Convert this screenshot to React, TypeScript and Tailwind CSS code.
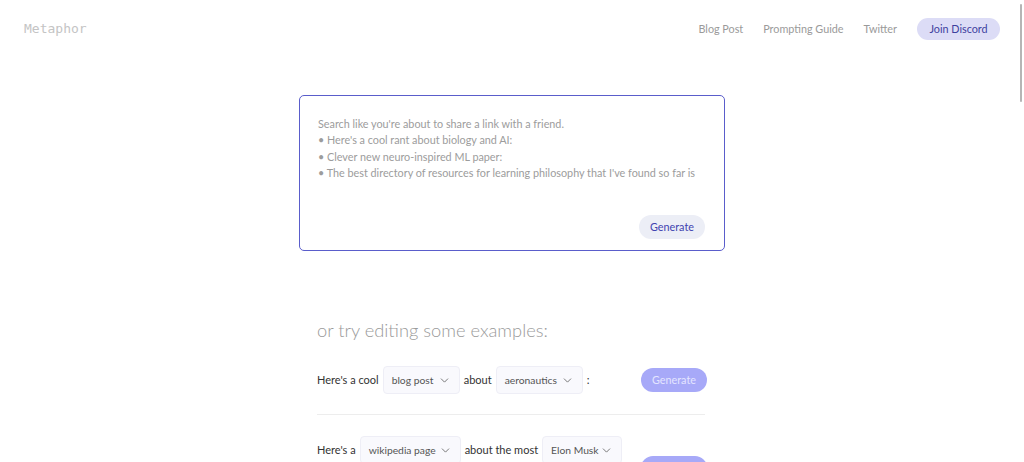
import React from 'react';
import { ChevronDown } from 'lucide-react';

type Example = {
  id: string;
  buttonOffset: string;
  parts: (string | { value: string; width: string })[];
};

const examples: Example[] = [
  {
    id: 'ex-1',
    buttonOffset: 'mt-[2px]',
    parts: ["Here's a cool", { value: 'blog post', width: 'w-[77px]' }, 'about', { value: 'aeronautics', width: 'w-[87px]' }, ':'],
  },
  {
    id: 'ex-2',
    buttonOffset: 'mt-[20px]',
    parts: ["Here's a", { value: 'wikipedia page', width: 'w-[101px]' }, 'about the most', { value: 'Elon Musk', width: 'w-[80px]' }],
  },
];

const promptLines = [
  "Search like you're about to share a link with a friend.",
  "• Here's a cool rant about biology and AI:",
  '• Clever new neuro-inspired ML paper:',
  "• The best directory of resources for learning philosophy that I've found so far is",
];

const SelectBox: React.FC<{ value: string; width: string }> = ({ value, width }) => (
  <div
    className={`${width} flex h-[28px] shrink-0 items-center justify-between whitespace-nowrap rounded-[4px] border border-[#eeeef6] bg-[#f9f9fd] pl-[8px] pr-[8px] text-[10.3px] text-[#555]`}
  >
    <span>{value}</span>
    <ChevronDown className="h-[13px] w-[13px] text-[#666]" strokeWidth={1.6} />
  </div>
);

const App: React.FC = () => {
  return (
    <div className="relative min-h-[462px] w-full overflow-hidden bg-white font-['Lato',sans-serif]">
      {/* overlay scrollbar thumb */}
      <div className="absolute right-[2px] top-[4px] h-[98px] w-[2px] rounded-full bg-[#b5b5b5]" />

      <header className="flex h-[58px] items-center justify-between pl-[24px] pr-[24px]">
        <span className="font-['DejaVu_Sans_Mono',monospace] text-[13px] text-[#c4c4c4]">Metaphor</span>
        <nav className="flex items-center gap-[20px] text-[10.8px] text-[#9a9a9a]">
          <a>Blog Post</a>
          <a>Prompting Guide</a>
          <a>Twitter</a>
          <button
            type="button"
            className="h-[22px] w-[83px] rounded-full bg-[#dcdcf6] text-[10.8px] text-[#3d3f9e]"
          >
            Join Discord
          </button>
        </nav>
      </header>

      <main className="mx-auto mt-[37px] w-[426px]">
        <div className="flex h-[156px] flex-col rounded-[5px] border-[1.5px] border-[#5a5dcb] px-[18px] pb-[11px] pt-[20px]">
          <div className="whitespace-nowrap text-[10.8px] leading-[16.3px] text-[#9c9c9c]">
            {promptLines.map((line) => (
              <div key={line}>{line}</div>
            ))}
          </div>
          <div className="mt-auto flex justify-end pr-[1px]">
            <button
              type="button"
              className="h-[24px] w-[66px] rounded-full bg-[#eceef6] text-[10.8px] text-[#3f43b0]"
            >
              Generate
            </button>
          </div>
        </div>

        <section className="px-[18px] pt-[66px]">
          <h2 className="text-[18.3px] font-light text-[#9a9a9a]">or try editing some examples:</h2>

          <div className="mt-[22px]">
            {examples.map((ex, i) => (
              <div key={ex.id}>
                {i > 0 && <div className="mb-[21px] mt-[20px] h-px w-[388px] bg-[#ededed]" />}
                <div className="flex items-start justify-between">
                  <div className="flex items-center gap-[4px] whitespace-nowrap text-[11px] text-[#333]">
                    {ex.parts.map((p, j) =>
                      typeof p === 'string' ? (
                        <span key={j}>{p}</span>
                      ) : (
                        <SelectBox key={j} value={p.value} width={p.width} />
                      ),
                    )}
                  </div>
                  <button
                    type="button"
                    className={`h-[24px] w-[66px] shrink-0 rounded-full bg-[#a7a9f8] text-[10.8px] text-[#e4e5ff] ${ex.buttonOffset}`}
                  >
                    Generate
                  </button>
                </div>
              </div>
            ))}
          </div>
        </section>
      </main>
    </div>
  );
};

export default App;
